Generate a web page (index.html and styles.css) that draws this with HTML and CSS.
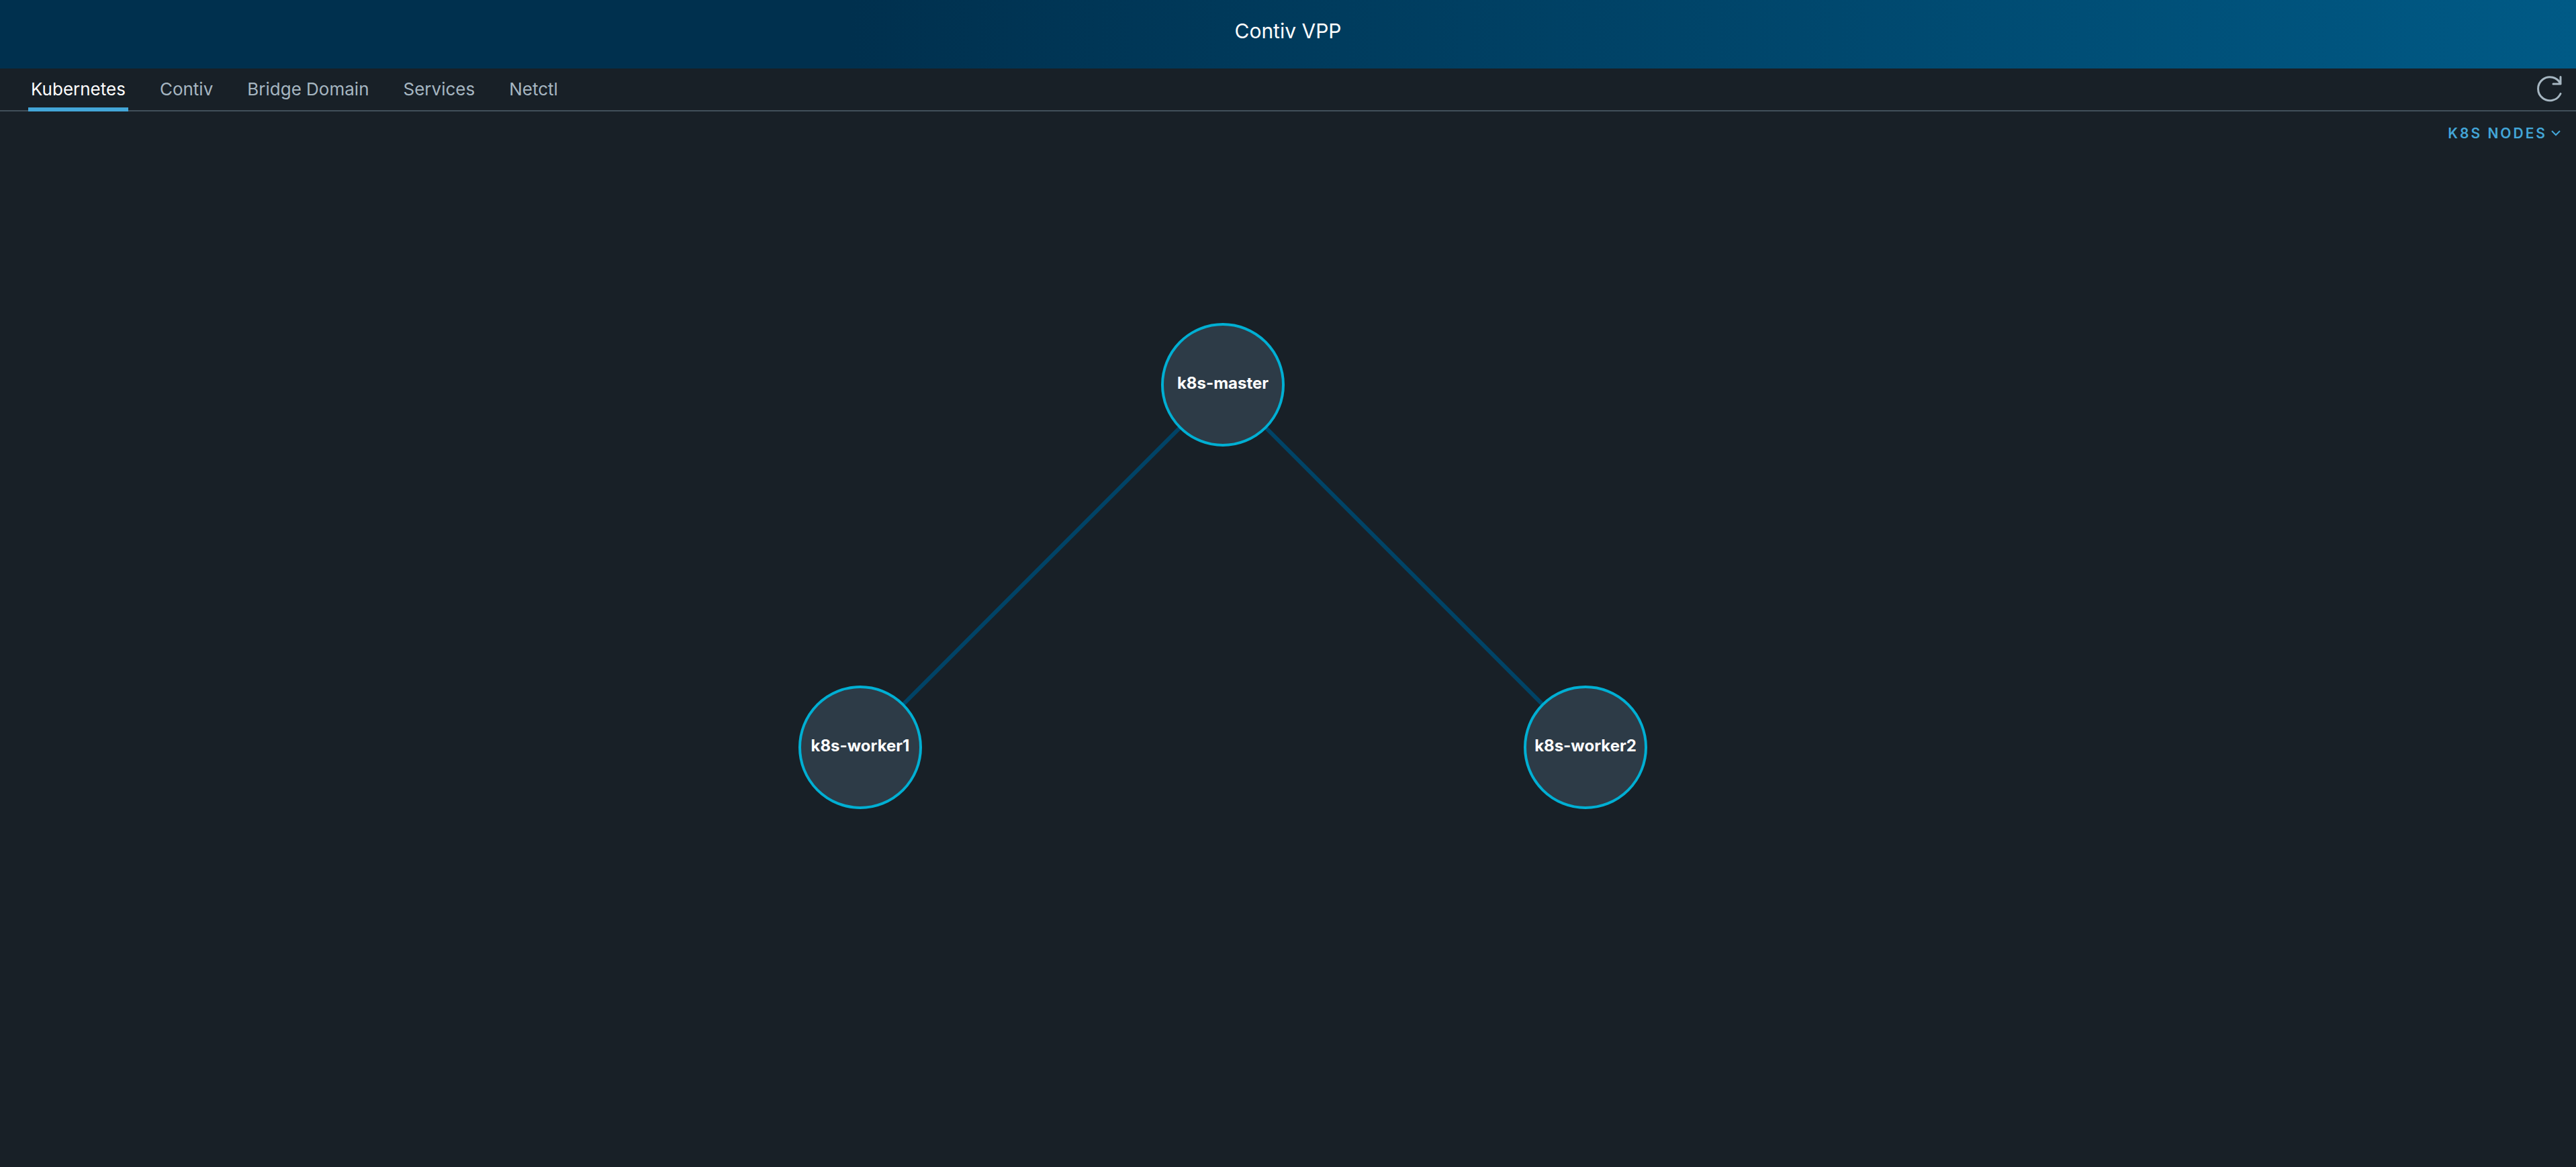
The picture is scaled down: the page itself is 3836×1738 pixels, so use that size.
FILE: index.html
```html
<!DOCTYPE html>
<html lang="en">
<head>
<meta charset="utf-8">
<title>Contiv VPP</title>
<link rel="stylesheet" href="styles.css">
</head>
<body>
<header class="header">
  <h1 class="header-title">Contiv VPP</h1>
</header>
<nav class="tabs" aria-label="Views">
  <div class="tab-list">
    <button class="tab tab-active" type="button" aria-current="page">Kubernetes</button>
    <button class="tab" type="button">Contiv</button>
    <button class="tab" type="button">Bridge Domain</button>
    <button class="tab" type="button">Services</button>
    <button class="tab" type="button">Netctl</button>
  </div>
  <button class="refresh" type="button" aria-label="Refresh">
    <svg class="refresh-icon" viewBox="0 0 38 40" aria-hidden="true">
      <path d="M35 26.500A17.500 17.500 0 1 1 35 12M35 1.500V12H24"/>
    </svg>
  </button>
</nav>
<main class="content">
  <div class="toolbar">
    <button class="dropdown" type="button" aria-haspopup="true">
      <span>K8S NODES</span>
      <svg class="caret" viewBox="0 0 14 10" aria-hidden="true"><path d="M1 2L7 8L13 2"/></svg>
    </button>
  </div>
  <svg class="topology" viewBox="0 0 3836 1520" preserveAspectRatio="xMidYMin meet" role="img" aria-label="Cluster topology">
    <g class="links">
      <line x1="1821" y1="361" x2="1281" y2="901"/>
      <line x1="1821" y1="361" x2="2361" y2="901"/>
    </g>
    <g class="node"><circle cx="1821" cy="361" r="90"/><text x="1821" y="367">k8s-master</text></g>
    <g class="node"><circle cx="1281" cy="901" r="90"/><text x="1281" y="907">k8s-worker1</text></g>
    <g class="node"><circle cx="2361" cy="901" r="90"/><text x="2361" y="907">k8s-worker2</text></g>
  </svg>
</main>
</body>
</html>
```
FILE: styles.css
```css
* { box-sizing: border-box; }

body {
  margin: 0;
  min-height: 100vh;
  display: flex;
  flex-direction: column;
  background: #182027;
  color: #fff;
  font-family: Inter, "Liberation Sans", sans-serif;
}

button {
  padding: 0;
  border: 0;
  background: none;
  color: inherit;
  font: inherit;
  cursor: pointer;
}

.header {
  height: 102px;
  padding-top: 26px;
  background: linear-gradient(90deg, #00304e 0%, #00304e 33%, #005a86 100%);
  text-align: center;
}

.header-title {
  margin: 0;
  font-size: 30px;
  line-height: 40px;
  font-weight: 400;
}

.tabs {
  display: flex;
  justify-content: space-between;
  height: 64px;
  padding: 0 20px 0 42px;
  border-bottom: 2px solid #41505a;
}

.tab-list {
  display: flex;
  gap: 43px;
  height: 64px;
}

.tab {
  padding: 4px 4px 0;
  border-bottom: 6px solid transparent;
  color: #a6b6c1;
  font-size: 26px;
  line-height: 54px;
  white-space: nowrap;
}

.tab-active {
  border-bottom-color: #43a6d8;
  color: #fff;
}

.refresh {
  display: flex;
  align-items: center;
}

.refresh-icon {
  width: 38px;
  height: 40px;
  fill: none;
  stroke: #a6b6c1;
  stroke-width: 3;
  stroke-linecap: round;
  stroke-linejoin: round;
}

.content {
  flex: 1;
  display: flex;
  flex-direction: column;
}

.toolbar {
  display: flex;
  justify-content: flex-end;
  height: 46px;
  padding: 16px 23px 0 0;
}

.dropdown {
  display: flex;
  align-items: center;
  gap: 6px;
  height: 32px;
  color: #43a6d8;
  font-size: 21px;
  font-weight: 600;
  letter-spacing: 3px;
}

.caret {
  width: 14px;
  height: 10px;
  fill: none;
  stroke: currentColor;
  stroke-width: 2;
}

.topology {
  display: block;
  width: 100%;
}

.links {
  stroke: #004366;
  stroke-width: 6;
}

.node circle {
  fill: #2d3b47;
  stroke: #00afd3;
  stroke-width: 4;
}

.node text {
  fill: #fff;
  font-size: 24px;
  font-weight: 700;
  text-anchor: middle;
}
```
